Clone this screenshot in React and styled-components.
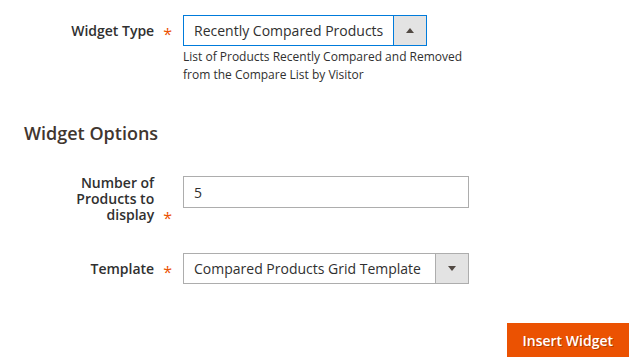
import React from "react";
import styled, { createGlobalStyle } from "styled-components";

const GlobalStyle = createGlobalStyle`
  html, body {
    margin: 0;
    padding: 0;
    background: #ffffff;
  }
  body {
    font-family: "Open Sans", "Noto Sans", sans-serif;
    color: #303030;
  }
`;

const Page = styled.div`
  width: 638px;
  height: 364px;
  box-sizing: border-box;
  padding: 15px 9px 0 0;
  display: flex;
  flex-direction: column;
`;

const Field = styled.div`
  display: flex;
  align-items: flex-start;
  gap: 11px;
  margin-top: ${(p) => p.$top || 0}px;
`;

const LabelCell = styled.div`
  width: 172px;
  flex: none;
  display: flex;
  justify-content: flex-end;
  align-items: flex-end;
  gap: 9px;
  margin-top: ${(p) => p.$offset}px;
`;

const LabelText = styled.label`
  max-width: 100px;
  text-align: right;
  font-size: 14px;
  font-weight: 600;
  line-height: 16px;
  color: #303030;
`;

const Asterisk = styled.span`
  font-size: 16px;
  font-weight: 500;
  line-height: 16px;
  color: #eb5202;
  margin-bottom: -3px;
`;

const Control = styled.div`
  display: flex;
  flex-direction: column;
  width: 286px;
`;

const SelectBox = styled.div`
  display: flex;
  width: ${(p) => p.$width}px;
  height: 31px;
  box-sizing: border-box;
  border: 1px solid ${(p) => (p.$focused ? "#007bdb" : "#adadad")};
  background: #ffffff;
`;

const SelectValue = styled.span`
  flex: 1;
  display: flex;
  align-items: center;
  padding-left: 10px;
  font-size: 14px;
  color: #303030;
  white-space: nowrap;
`;

const ArrowBox = styled.span`
  width: 32px;
  flex: none;
  display: flex;
  align-items: center;
  justify-content: center;
  background: #e3e3e3;
  border-left: 1px solid ${(p) => (p.$focused ? "#007bdb" : "#adadad")};
`;

const Triangle = styled.span`
  width: 0;
  height: 0;
  border-left: 4px solid transparent;
  border-right: 4px solid transparent;
  ${(p) =>
    p.$up
      ? "border-bottom: 5px solid #514943;"
      : "border-top: 5px solid #514943;"}
`;

const TextInput = styled.input`
  width: 286px;
  height: 32px;
  box-sizing: border-box;
  margin: 0;
  border: 1px solid #adadad;
  border-radius: 0;
  padding: 0 10px;
  font: 14px "Open Sans", "Noto Sans", sans-serif;
  color: #303030;
  background: #ffffff;
  outline: none;
`;

const Note = styled.div`
  margin-top: 2px;
  font-size: 12px;
  line-height: 18px;
  color: #303030;
`;

const SectionTitle = styled.h2`
  margin: 39px 0 0;
  padding-left: 24px;
  font-size: 18px;
  font-weight: 600;
  line-height: 20px;
  color: #41362f;
`;

const Actions = styled.div`
  display: flex;
  justify-content: flex-end;
  margin-top: 39px;
`;

const PrimaryButton = styled.button`
  height: 34px;
  padding: 0 15px;
  border: 1px solid #eb5202;
  border-radius: 0;
  background: #eb5202;
  color: #ffffff;
  font: 600 14px "Open Sans", "Noto Sans", sans-serif;
  text-shadow: 1px 1px 0 rgba(0, 0, 0, 0.25);
  cursor: pointer;
`;

const Select = ({ value, width = 286, focused, open }) => (
  <SelectBox $width={width} $focused={focused}>
    <SelectValue>{value}</SelectValue>
    <ArrowBox $focused={focused}>
      <Triangle $up={open} />
    </ArrowBox>
  </SelectBox>
);

const Label = ({ children, offset = 7.5 }) => (
  <LabelCell $offset={offset}>
    <LabelText>{children}</LabelText>
    <Asterisk>*</Asterisk>
  </LabelCell>
);

export default function App() {
  return (
    <>
      <GlobalStyle />
      <Page>
        <Field>
          <Label>Widget Type</Label>
          <Control>
            <Select value="Recently Compared Products" width={244} focused open />
            <Note>
              List of Products Recently Compared and Removed from the Compare
              List by Visitor
            </Note>
          </Control>
        </Field>

        <SectionTitle>Widget Options</SectionTitle>

        <Field $top={33}>
          <Label offset={-1}>Number of Products to display</Label>
          <Control>
            <TextInput defaultValue="5" />
          </Control>
        </Field>

        <Field $top={30}>
          <Label>Template</Label>
          <Control>
            <Select value="Compared Products Grid Template" />
          </Control>
        </Field>

        <Actions>
          <PrimaryButton>Insert Widget</PrimaryButton>
        </Actions>
      </Page>
    </>
  );
}
